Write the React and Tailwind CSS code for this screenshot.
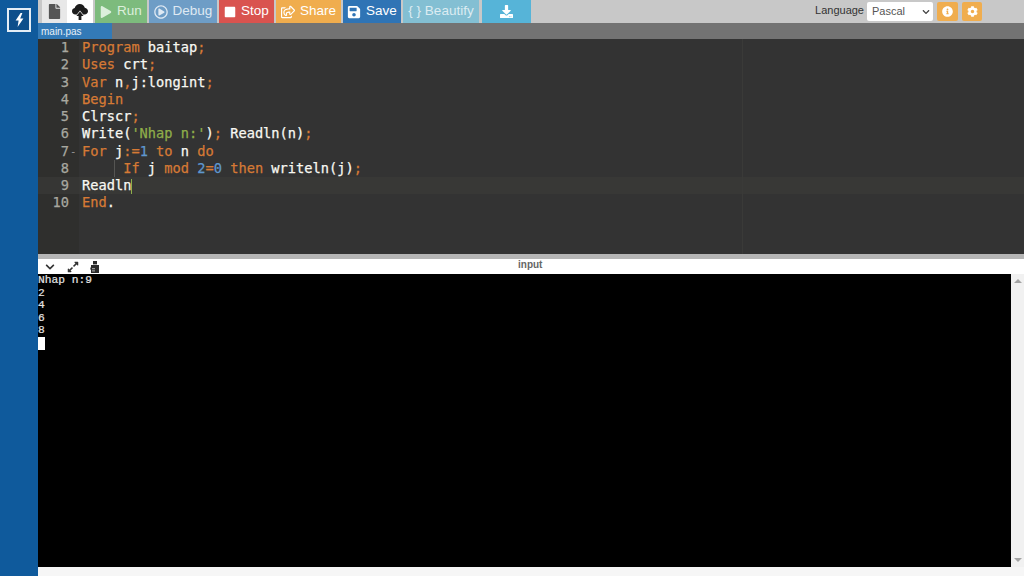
import {
  FaFile, FaPlay, FaRegPlayCircle, FaStop, FaRegShareSquare, FaSave,
  FaDownload, FaInfoCircle, FaCog, FaChevronDown, FaExpandAlt,
} from "react-icons/fa";

const K = ({ children }) => <span className="text-[#d67a35]">{children}</span>;
const N = ({ children }) => <span className="text-[#5f97cf]">{children}</span>;
const S = ({ children }) => <span className="text-[#8fae4a]">{children}</span>;

const lines = [
  <><K>Program</K> baitap<K>;</K></>,
  <><K>Uses</K> crt<K>;</K></>,
  <><K>Var</K> n<K>,</K>j:longint<K>;</K></>,
  <><K>Begin</K></>,
  <>Clrscr<K>;</K></>,
  <>Write(<S>'Nhap n:'</S>)<K>;</K> Readln(n)<K>;</K></>,
  <><K>For</K> j<K>:=</K><N>1</N> <K>to</K> n <K>do</K></>,
  <>{"     "}<K>If</K> j <K>mod</K> <N>2</N><K>=</K><N>0</N> <K>then</K> writeln(j)<K>;</K></>,
  <>Readln<span className="inline-block h-[15px] w-px bg-[#8fae4a] align-middle" /></>,
  <><K>End</K>.</>,
];

const buttons = [
  { label: "Run", Icon: FaPlay, cls: "w-[52px] bg-[#7dbb7d] text-[#dcefdc]", icon: "text-[12px]" },
  { label: "Debug", Icon: FaRegPlayCircle, cls: "w-[68px] bg-[#6e9dc6] text-[#dfe9f3]", icon: "text-[14px]" },
  { label: "Stop", Icon: FaStop, cls: "w-[55px] bg-[#d9534f] text-white", icon: "text-[12px]" },
  { label: "Share", Icon: FaRegShareSquare, cls: "w-[65px] bg-[#f0ad4e] text-white", icon: "text-[14px]" },
  { label: "Save", Icon: FaSave, cls: "w-[58px] bg-[#2f74b5] text-white", icon: "text-[14px]" },
];

function CloudUp() {
  return (
    <svg width="16" height="17" viewBox="0 0 16 17" fill="#1c1c1c">
      <path d="M3.4 11.5C1.4 11.5 0 10.1 0 8.3c0-1.6 1.1-2.9 2.7-3.2C3.2 2.7 5.3 1 7.8 1c2.4 0 4.4 1.5 5 3.7 1.8.2 3.2 1.7 3.2 3.5 0 1.8-1.5 3.3-3.4 3.3h-1.4L8 7.6 4.8 11.5z" />
      <path d="M8 8.6l3.6 4.3H9.4V17H6.6v-4.1H4.4z" />
    </svg>
  );
}

function Bolt() {
  return (
    <svg width="9" height="14" viewBox="0 0 9 14" fill="white">
      <path d="M5.6 0L0.6 7.6h3L2.6 14l5.8-8.4H5.2L7.4 0z" />
    </svg>
  );
}

function Keeper() {
  return (
    <svg width="10" height="12" viewBox="0 0 10 12" fill="#2a2a2a">
      <path d="M3 0h4v3.4H3z" />
      <path d="M1 4h8v8H1zM1 5.5L0 8.5h1z" />
      <path d="M2 7h3v1.2H2zM2 9.2h3v1.2H2z" fill="#9a9a9a" />
    </svg>
  );
}

export default function App() {
  return (
    <div className="flex h-[576px] w-[1024px] overflow-hidden bg-white font-['Liberation_Sans',sans-serif]">
      {/* sidebar */}
      <aside className="flex w-[38px] shrink-0 flex-col items-center bg-[#0f5a9c] pt-[8px]">
        <div className="flex h-[24px] w-[24px] items-center justify-center border-2 border-[#e4edf5] bg-[#0e4f8b]">
          <Bolt />
        </div>
      </aside>

      <main className="flex min-w-0 flex-1 flex-col">
        {/* toolbar */}
        <div className="flex h-[23px] shrink-0 items-center bg-[#c8c8c8] pl-[4px]">
          <div className="flex h-full w-[25px] items-center justify-center bg-[#e8e8e8] text-[15px] text-[#555]">
            <FaFile />
          </div>
          <div className="flex h-full w-[26px] items-center justify-center bg-white">
            <CloudUp />
          </div>
          <div className="ml-[2px] flex h-full gap-[2px]">
            {buttons.map(({ label, Icon, cls, icon }) => (
              <div key={label} className={`flex items-center justify-center gap-[5px] text-[13.5px] ${cls}`}>
                <Icon className={icon} />
                <span>{label}</span>
              </div>
            ))}
            <div className="flex w-[76px] items-center justify-center bg-[#83bfd3] text-[13.5px] text-[#dcecf2]">
              {"{ } Beautify"}
            </div>
            <div className="ml-[1px] flex w-[49px] items-center justify-center bg-[#56b4d8] text-[13px] text-white">
              <FaDownload />
            </div>
          </div>
          <div className="ml-auto flex h-full items-center pr-[42px]">
            <span className="relative top-[-1px] text-[11px] text-[#333]">Language</span>
            <div className="ml-[3px] flex h-[19px] w-[66px] items-center justify-between rounded-[2px] bg-white pl-[5px] pr-[3px] text-[11px] text-[#555]">
              <span>Pascal</span>
              <FaChevronDown className="text-[8px] text-[#444]" />
            </div>
            <div className="ml-[4px] flex h-[19px] w-[21px] items-center justify-center rounded-[2px] bg-[#f0ad4e] text-[11px] text-white">
              <FaInfoCircle />
            </div>
            <div className="ml-[4px] flex h-[19px] w-[20px] items-center justify-center rounded-[2px] bg-[#f0ad4e] text-[11px] text-white">
              <FaCog />
            </div>
          </div>
        </div>

        {/* tab strip */}
        <div className="flex h-[16px] shrink-0 bg-[#737373]">
          <div className="flex w-[74px] items-center bg-[#337ab7] pl-[3px] text-[10px] text-[#e8f0f7]">main.pas</div>
        </div>

        {/* editor */}
        <div className="flex h-[215px] shrink-0 bg-[#333333] font-['DejaVu_Sans_Mono',monospace] text-[13.68px] leading-[17.25px] text-[#f8f8f2] [-webkit-text-stroke:0.25px_currentColor]">
          <div className="w-[41px] shrink-0 bg-[#2f2f2d] text-right text-[#a8a8a0]">
            {lines.map((_, i) => (
              <div key={i} className={`relative h-[17.25px] pr-[10px] ${i === 8 ? "bg-[#363634]" : ""}`}>
                {i + 1}
                {i === 6 && <span className="absolute right-[3px] top-[1px] text-[9px] text-[#999]">-</span>}
              </div>
            ))}
          </div>
          <div className="relative min-w-0 flex-1">
            {lines.map((line, i) => (
              <div key={i} className={`h-[17.25px] whitespace-pre pl-[3px] ${i === 8 ? "bg-[#383836]" : ""}`}>
                {line}
              </div>
            ))}
            {/* indent guide and print margin */}
            <div className="absolute left-[35px] top-[121px] h-[17px] w-px bg-[#555553]" />
            <div className="absolute bottom-0 left-[663px] top-0 w-px bg-[#3a3a38]" />
          </div>
        </div>

        <div className="h-[5px] shrink-0 bg-[#b5b5b5]" />

        {/* io bar */}
        <div className="relative flex h-[15px] shrink-0 items-center bg-white pl-[6px] text-[#333]">
          <FaChevronDown className="ml-[1px] text-[10px]" />
          <FaExpandAlt className="ml-[12px] text-[12px]" />
          <span className="ml-[11px]"><Keeper /></span>
          <span className="absolute left-[480px] top-[-2px] text-[10px] font-bold text-[#666]">input</span>
        </div>

        {/* terminal */}
        <div className="flex h-[293px] shrink-0">
          <div className="min-w-0 flex-1 bg-black font-['Liberation_Mono',monospace] text-[11.25px] leading-[12.6px] text-[#e5e5e5] [-webkit-text-stroke:0.2px_currentColor]">
            <div>Nhap n:9</div>
            <div>2</div>
            <div>4</div>
            <div>6</div>
            <div>8</div>
            <div className="h-[13px] w-[7px] bg-white" />
          </div>
          <div className="flex w-[13px] shrink-0 flex-col items-center justify-between bg-[#f1f1f1] py-[5px]">
            <div className="h-0 w-0 border-x-[4px] border-b-[4px] border-x-transparent border-b-[#a3a3a3]" />
            <div className="h-0 w-0 border-x-[4px] border-t-[4px] border-x-transparent border-t-[#a3a3a3]" />
          </div>
        </div>
        <div className="flex-1 bg-[#f6f6f6]" />
      </main>
    </div>
  );
}
